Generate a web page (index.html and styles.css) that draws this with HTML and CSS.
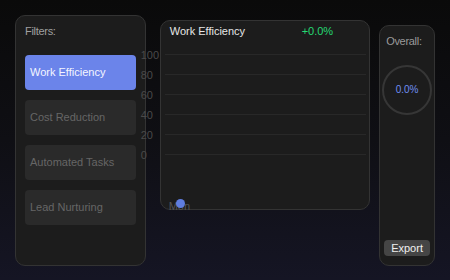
FILE: index.html
```html
<!DOCTYPE html>
<html>
<head>
<meta charset="utf-8">
<link rel="stylesheet" href="styles.css">
</head>
<body>
<div class="app">
  <aside class="filters">
    <div class="filters-title">Filters:</div>
    <div class="filter-list">
      <div class="filter active">Work Efficiency</div>
      <div class="filter">Cost Reduction</div>
      <div class="filter">Automated Tasks</div>
      <div class="filter">Lead Nurturing</div>
    </div>
  </aside>
  <section class="chart">
    <div class="chart-head">
      <span class="chart-title">Work Efficiency</span>
      <span class="chart-delta">+0.0%</span>
    </div>
    <div class="y-axis">
      <span>100</span><span>80</span><span>60</span><span>40</span><span>20</span><span>0</span>
    </div>
    <div class="grid">
      <div class="line"></div><div class="line"></div><div class="line"></div>
      <div class="line"></div><div class="line"></div><div class="line"></div>
    </div>
    <div class="x-axis">
      <span class="x-label">Mon</span>
      <span class="dot"></span>
    </div>
  </section>
  <aside class="overall">
    <div class="overall-title">Overall:</div>
    <div class="ring">0.0%</div>
    <button class="export">Export</button>
  </aside>
</div>
</body>
</html>
```
FILE: styles.css
```css
html, body {
  margin: 0;
  height: 280px;
}
body {
  background: linear-gradient(to bottom, #0a0a0a 0%, #0f0f14 50%, #151524 100%);
  font-family: "Liberation Sans", Arial, sans-serif;
  font-size: 11px;
  line-height: 14px;
  overflow: hidden;
}
.app {
  display: flex;
  align-items: flex-start;
  padding: 15px;
}
.filters {
  box-sizing: border-box;
  width: 131px;
  height: 251px;
  background: #1c1c1c;
  border: 1px solid #333;
  border-radius: 10px;
  padding: 8px 9px;
}
.filters-title {
  color: #a0a0a0;
  letter-spacing: -0.3px;
}
.filter-list {
  margin-top: 17px;
  display: flex;
  flex-direction: column;
  gap: 10px;
}
.filter {
  box-sizing: border-box;
  height: 35px;
  display: flex;
  align-items: center;
  padding: 0 0 2px 5px;
  background: #2a2a2a;
  border-radius: 4px;
  color: #666;
}
.filter.active {
  background: #6b84ea;
  color: #f4f6ff;
}
.chart {
  position: relative;
  box-sizing: border-box;
  width: 211px;
  height: 190px;
  margin: 5px 0 0 14px;
  background: #1c1c1c;
  border: 1px solid #333;
  border-radius: 10px;
  padding: 3px 0 0 0;
  display: flex;
  flex-direction: column;
}
.chart-head {
  display: flex;
  justify-content: space-between;
  padding: 0 36px 0 9px;
}
.chart-title {
  color: #e6e6e6;
}
.chart-delta {
  color: #25d873;
}
.y-axis {
  position: absolute;
  left: -20px;
  top: 24px;
  display: flex;
  flex-direction: column;
  color: #4a4a4a;
  font-size: 11px;
}
.y-axis span {
  line-height: 20px;
}
.grid {
  margin: 16px 3px 0 4px;
  display: flex;
  flex-direction: column;
  gap: 19px;
}
.line {
  height: 1px;
  background: #282828;
}
.x-axis {
  position: relative;
  margin-top: auto;
  padding: 0 0 0 8px;
  height: 14px;
  margin-bottom: -4px;
}
.x-label {
  color: #555;
}
.dot {
  position: absolute;
  left: 15px;
  top: 0px;
  width: 9px;
  height: 9px;
  border-radius: 50%;
  background: #5f7ddf;
}
.overall {
  box-sizing: border-box;
  width: 56px;
  height: 241px;
  margin: 10px 0 0 9px;
  background: #1c1c1c;
  border: 1px solid #333;
  border-radius: 10px;
  padding: 8px 0 9px 0;
  display: flex;
  flex-direction: column;
  align-items: center;
}
.overall-title {
  align-self: flex-start;
  padding-left: 6px;
  color: #9a9a9a;
  letter-spacing: -0.3px;
}
.ring {
  box-sizing: border-box;
  width: 50px;
  height: 50px;
  margin-top: 17px;
  border: 2px solid #363636;
  border-radius: 50%;
  display: flex;
  align-items: center;
  justify-content: center;
  color: #6f8ef2;
  font-size: 10px;
}
.export {
  margin-top: auto;
  width: 46px;
  height: 16px;
  padding: 0;
  border: none;
  border-radius: 4px;
  background: #454545;
  color: #f0f0f0;
  font-family: "Liberation Sans", Arial, sans-serif;
  font-size: 11px;
  line-height: 16px;
}
```
